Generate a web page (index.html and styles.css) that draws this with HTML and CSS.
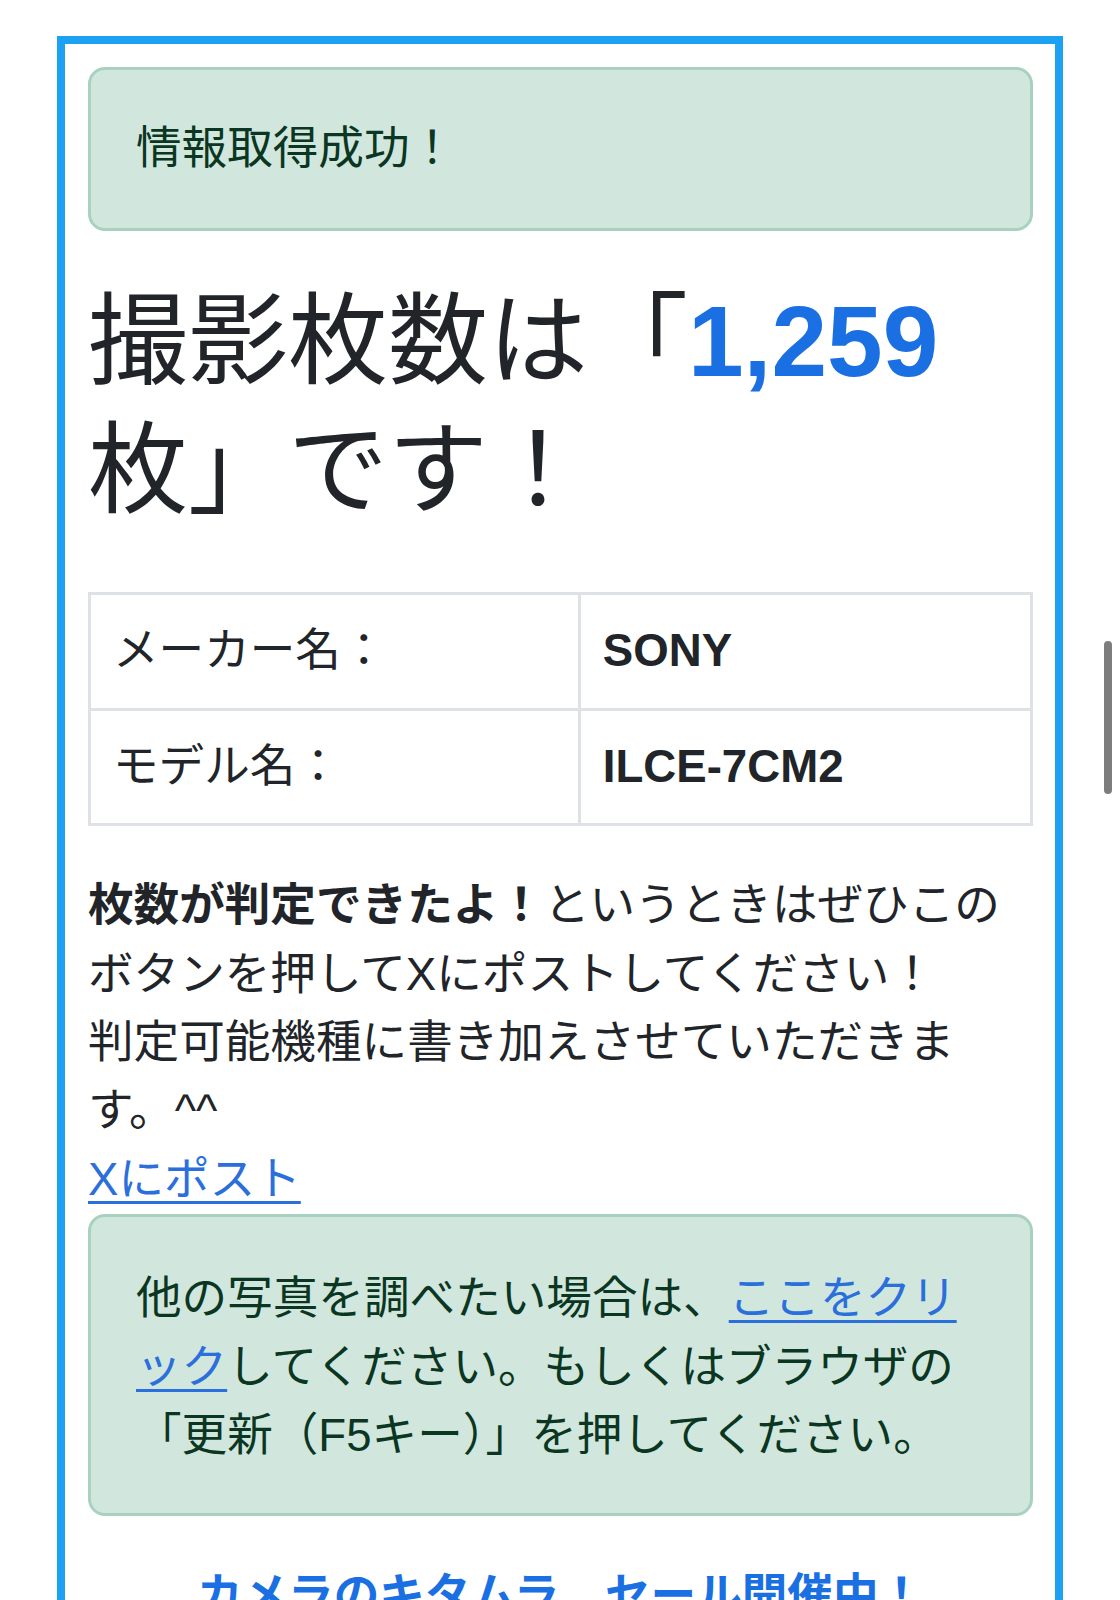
FILE: index.html
```html
<!DOCTYPE html>
<html lang="ja">
<head>
<meta charset="utf-8">
<title>撮影枚数チェッカー</title>
<link rel="stylesheet" href="styles.css">
</head>
<body>
<div class="frame">
  <div class="alert">情報取得成功！</div>

  <h1 class="count-title">撮影枚数は「<strong class="count">1,259</strong>枚」です！</h1>

  <table class="info">
    <tr>
      <td class="label">メーカー名：</td>
      <td class="value">SONY</td>
    </tr>
    <tr>
      <td class="label">モデル名：</td>
      <td class="value">ILCE-7CM2</td>
    </tr>
  </table>

  <p class="note"><b>枚数が判定できたよ！</b>というときはぜひこのボタンを押してXにポストしてください！<br>判定可能機種に書き加えさせていただきます。^^<br><a class="link" href="#">Xにポスト</a></p>

  <div class="alert alert-info">他の写真を調べたい場合は、<a class="link" href="#">ここをクリック</a>してください。もしくはブラウザの「更新（F5キー）」を押してください。</div>

  <h2 class="promo">カメラのキタムラ　セール開催中！</h2>
  <div class="spacer"></div>
</div>
<div class="scroll-indicator"></div>
</body>
</html>
```

FILE: styles.css
```css
html, body {
  margin: 0;
  padding: 0;
  background: #ffffff;
}

body {
  font-family: "Liberation Sans", "Noto Sans CJK JP", sans-serif;
  font-size: 45.6px;
  line-height: 1.5;
  color: #212529;
  line-break: normal;
}

.frame {
  margin: 36px 57px 0;
  border: 8px solid #1da1f2;
  padding: 23px 22px 0 23px;
}

.alert {
  background: #d1e7dd;
  border: 3px solid #a8d2bf;
  border-radius: 17px;
  color: #0a3622;
  padding: 45px 45px;
  margin-bottom: 46px;
}

.alert-info {
  margin-bottom: 0;
  padding-top: 48px;
  padding-bottom: 43px;
}

.count-title {
  font-size: 100px;
  line-height: 129px;
  font-weight: 400;
  margin: 16px 0 57px;
  color: #212529;
}

.count {
  color: #1a70e3;
  font-weight: 700;
}

.info {
  width: 100%;
  border-collapse: collapse;
  margin-bottom: 46px;
}

.info td {
  border: 3px solid #dee2e6;
  padding: 22px 22px;
  vertical-align: middle;
}

.info .label {
  width: 52%;
}

.info .value {
  font-weight: 700;
}

.note {
  margin: 0;
}

.note b {
  font-weight: 700;
}

.link {
  color: #2a6fdb;
  text-decoration: underline;
  text-decoration-thickness: 3px;
  text-underline-offset: 6px;
}

.promo {
  margin: 46px 0 0;
  font-size: 45.6px;
  line-height: 1.5;
  font-weight: 700;
  text-align: center;
  color: #1a70e3;
}

.spacer {
  height: 400px;
}

.scroll-indicator {
  position: fixed;
  top: 641px;
  right: 8px;
  width: 8px;
  height: 153px;
  border-radius: 4px;
  background: #7d7d7d;
  box-shadow: 0 0 0 1px rgba(255, 255, 255, 0.8);
}
```
